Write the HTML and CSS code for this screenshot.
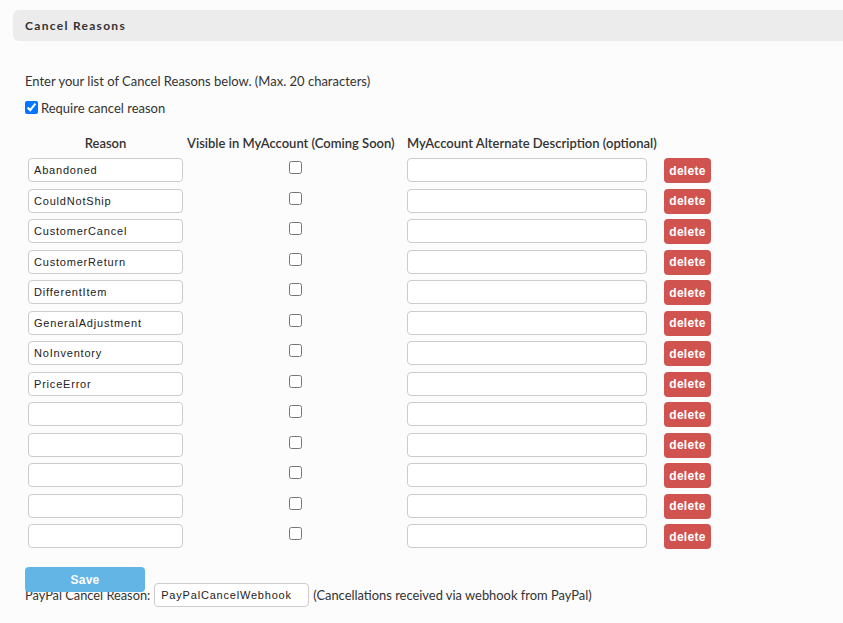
FILE: index.html
```html
<!DOCTYPE html>
<html>
<head>
<meta charset="utf-8">
<link rel="stylesheet" href="styles.css">
</head>
<body>
<div class="panel-heading">Cancel Reasons</div>
<div class="content">
  <p class="intro">Enter your list of Cancel Reasons below. (Max. 20 characters)</p>
  <label class="require"><input type="checkbox" checked> Require cancel reason</label>
  <div class="reasons">
    <div class="th th-reason">Reason</div>
    <div class="th th-visible">Visible in MyAccount (Coming Soon)</div>
    <div class="th th-desc">MyAccount Alternate Description (optional)</div>
    <div class="th"></div>

    <input class="txt reason" type="text" value="Abandoned"><div class="cell-check"><input type="checkbox"></div><input class="txt desc" type="text"><button class="btn-delete">delete</button>
    <input class="txt reason" type="text" value="CouldNotShip"><div class="cell-check"><input type="checkbox"></div><input class="txt desc" type="text"><button class="btn-delete">delete</button>
    <input class="txt reason" type="text" value="CustomerCancel"><div class="cell-check"><input type="checkbox"></div><input class="txt desc" type="text"><button class="btn-delete">delete</button>
    <input class="txt reason" type="text" value="CustomerReturn"><div class="cell-check"><input type="checkbox"></div><input class="txt desc" type="text"><button class="btn-delete">delete</button>
    <input class="txt reason" type="text" value="DifferentItem"><div class="cell-check"><input type="checkbox"></div><input class="txt desc" type="text"><button class="btn-delete">delete</button>
    <input class="txt reason" type="text" value="GeneralAdjustment"><div class="cell-check"><input type="checkbox"></div><input class="txt desc" type="text"><button class="btn-delete">delete</button>
    <input class="txt reason" type="text" value="NoInventory"><div class="cell-check"><input type="checkbox"></div><input class="txt desc" type="text"><button class="btn-delete">delete</button>
    <input class="txt reason" type="text" value="PriceError"><div class="cell-check"><input type="checkbox"></div><input class="txt desc" type="text"><button class="btn-delete">delete</button>
    <input class="txt reason" type="text"><div class="cell-check"><input type="checkbox"></div><input class="txt desc" type="text"><button class="btn-delete">delete</button>
    <input class="txt reason" type="text"><div class="cell-check"><input type="checkbox"></div><input class="txt desc" type="text"><button class="btn-delete">delete</button>
    <input class="txt reason" type="text"><div class="cell-check"><input type="checkbox"></div><input class="txt desc" type="text"><button class="btn-delete">delete</button>
    <input class="txt reason" type="text"><div class="cell-check"><input type="checkbox"></div><input class="txt desc" type="text"><button class="btn-delete">delete</button>
    <input class="txt reason" type="text"><div class="cell-check"><input type="checkbox"></div><input class="txt desc" type="text"><button class="btn-delete">delete</button>
  </div>
  <div class="paypal">
    <span class="paypal-label">PayPal Cancel Reason:</span>
    <input class="txt paypal-input" type="text" value="PayPalCancelWebhook">
    <span class="paypal-note">(Cancellations received via webhook from PayPal)</span>
  </div>
</div>
<button class="btn-save">Save</button>
</body>
</html>
```

FILE: styles.css
```css
html, body {
  margin: 0;
  padding: 0;
  background: #fcfcfc;
}
body {
  font-family: Lato, "Open Sans", sans-serif;
  font-size: 13px;
  color: #333;
}
.panel-heading {
  margin: 10px 0 0 13px;
  height: 31px;
  line-height: 31px;
  padding-left: 12px;
  background: #ececec;
  border-radius: 6px 0 0 6px;
  font-weight: 700;
  font-size: 12px;
  letter-spacing: 1.3px;
  color: #333;
}
.content {
  padding-left: 25px;
}
.intro {
  margin: 32px 0 0 0;
  line-height: 16px;
}
.require {
  display: flex;
  align-items: center;
  margin-top: 10.5px;
  height: 16px;
  gap: 3px;
}
.require input {
  margin: 0;
  width: 13px;
  height: 13px;
}
.reasons {
  display: grid;
  grid-template-columns: 155px 216px 253px 47px;
  column-gap: 4px;
  row-gap: 5.5px;
  margin: 19.5px 0 0 3px;
  align-items: start;
}
.th {
  font-weight: 600;
  line-height: 16px;
  color: #333;
  margin-bottom: 1.5px;
}
.th-reason {
  text-align: center;
}
.txt {
  box-sizing: border-box;
  height: 24px;
  border: 1px solid #ccc;
  border-radius: 4px;
  background: #fff;
  padding: 0 5px;
  font-family: "Liberation Sans", Arial, sans-serif;
  font-size: 11px;
  letter-spacing: 0.8px;
  color: #222;
  margin: 0;
}
.reason {
  width: 155px;
}
.desc {
  width: 240px;
}
.cell-check {
  display: flex;
  justify-content: center;
}
.cell-check input {
  margin: 3px 3px 3px 4px;
  width: 13px;
  height: 13px;
}
.btn-delete {
  width: 47px;
  height: 25px;
  border: none;
  border-radius: 4px;
  background: #d0534f;
  color: #fff;
  font-family: "Liberation Sans", Arial, sans-serif;
  font-weight: 700;
  font-size: 12px;
  letter-spacing: 0.3px;
  padding: 0;
  margin: 0;
}
.paypal {
  display: flex;
  align-items: center;
  margin-top: 34px;
  gap: 4px;
}
.paypal-label {
  font-size: 12.8px;
}
.paypal-note {
  font-size: 12.9px;
}
.paypal-input {
  width: 155px;
  padding-left: 6px;
}
.btn-save {
  position: fixed;
  left: 25px;
  bottom: 31px;
  width: 120px;
  height: 25px;
  border: none;
  border-radius: 4px;
  background: #62b5e5;
  color: #fff;
  font-family: "Liberation Sans", Arial, sans-serif;
  font-weight: 700;
  font-size: 12px;
  letter-spacing: 0.2px;
  padding: 0;
}
```
